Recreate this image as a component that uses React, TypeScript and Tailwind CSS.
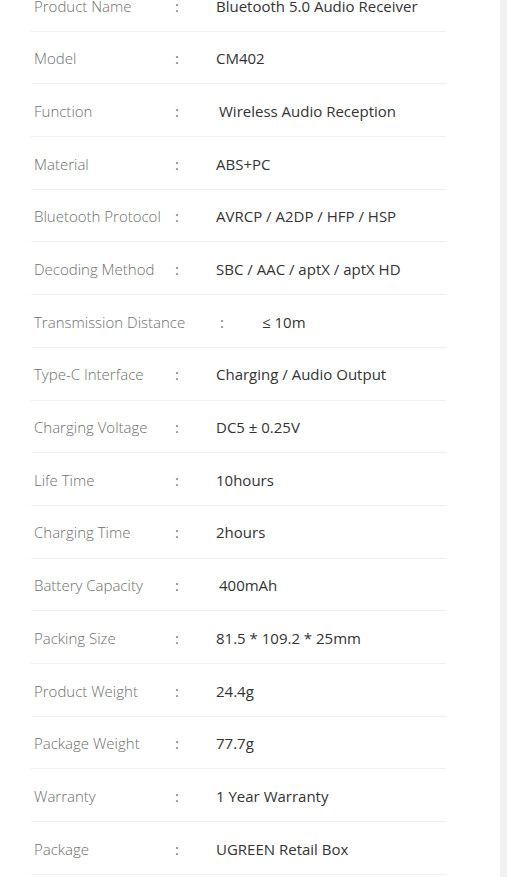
import React from 'react';

type Spec = {
  label: string;
  value: string;
  labelW?: string;
  valuePad?: string;
};

const specs: Spec[] = [
  { label: 'Product Name', value: 'Bluetooth 5.0 Audio Receiver' },
  { label: 'Model', value: 'CM402' },
  { label: 'Function', value: 'Wireless Audio Reception', valuePad: 'pl-[3px]' },
  { label: 'Material', value: 'ABS+PC' },
  { label: 'Bluetooth Protocol', value: 'AVRCP / A2DP / HFP / HSP' },
  { label: 'Decoding Method', value: 'SBC / AAC / aptX / aptX HD' },
  { label: 'Transmission Distance', value: '≤ 10m', labelW: 'w-[186px]', valuePad: 'pl-[1px]' },
  { label: 'Type-C Interface', value: 'Charging / Audio Output' },
  { label: 'Charging Voltage', value: 'DC5 ± 0.25V' },
  { label: 'Life Time', value: '10hours' },
  { label: 'Charging Time', value: '2hours' },
  { label: 'Battery Capacity', value: '400mAh', valuePad: 'pl-[3px]' },
  { label: 'Packing Size', value: '81.5 * 109.2 * 25mm' },
  { label: 'Product Weight', value: '24.4g' },
  { label: 'Package Weight', value: '77.7g' },
  { label: 'Warranty', value: '1 Year Warranty' },
  { label: 'Package', value: 'UGREEN Retail Box' },
];

const SpecRow: React.FC<{ spec: Spec }> = ({ spec }) => (
  <div className="ml-[31px] flex h-[52.7px] w-[415px] items-center border-b border-[#f1f1f1] pl-[3px] pt-[2px]">
    <span className={`${spec.labelW ?? 'w-[141px]'} shrink-0 whitespace-nowrap text-[15px] font-light text-[#6e6e6e]`}>
      {spec.label}
    </span>
    <span className="w-[41px] shrink-0 text-[15px] text-[#777]">:</span>
    <span className={`${spec.valuePad ?? ''} whitespace-nowrap text-[15px] font-medium text-[#333]`}>
      {spec.value}
    </span>
  </div>
);

const App: React.FC = () => {
  return (
    <div
      className="flex h-[877px] w-[507px] overflow-hidden bg-white"
      style={{ fontFamily: '"Open Sans", "Noto Sans", sans-serif' }}
    >
      <div className="w-[500px] shrink-0">
        <div className="-mt-[21px] flex flex-col">
          {specs.map((spec) => (
            <SpecRow key={spec.label} spec={spec} />
          ))}
        </div>
      </div>
      <div className="h-full flex-1 bg-[#f1f1f1]" />
    </div>
  );
};

export default App;
